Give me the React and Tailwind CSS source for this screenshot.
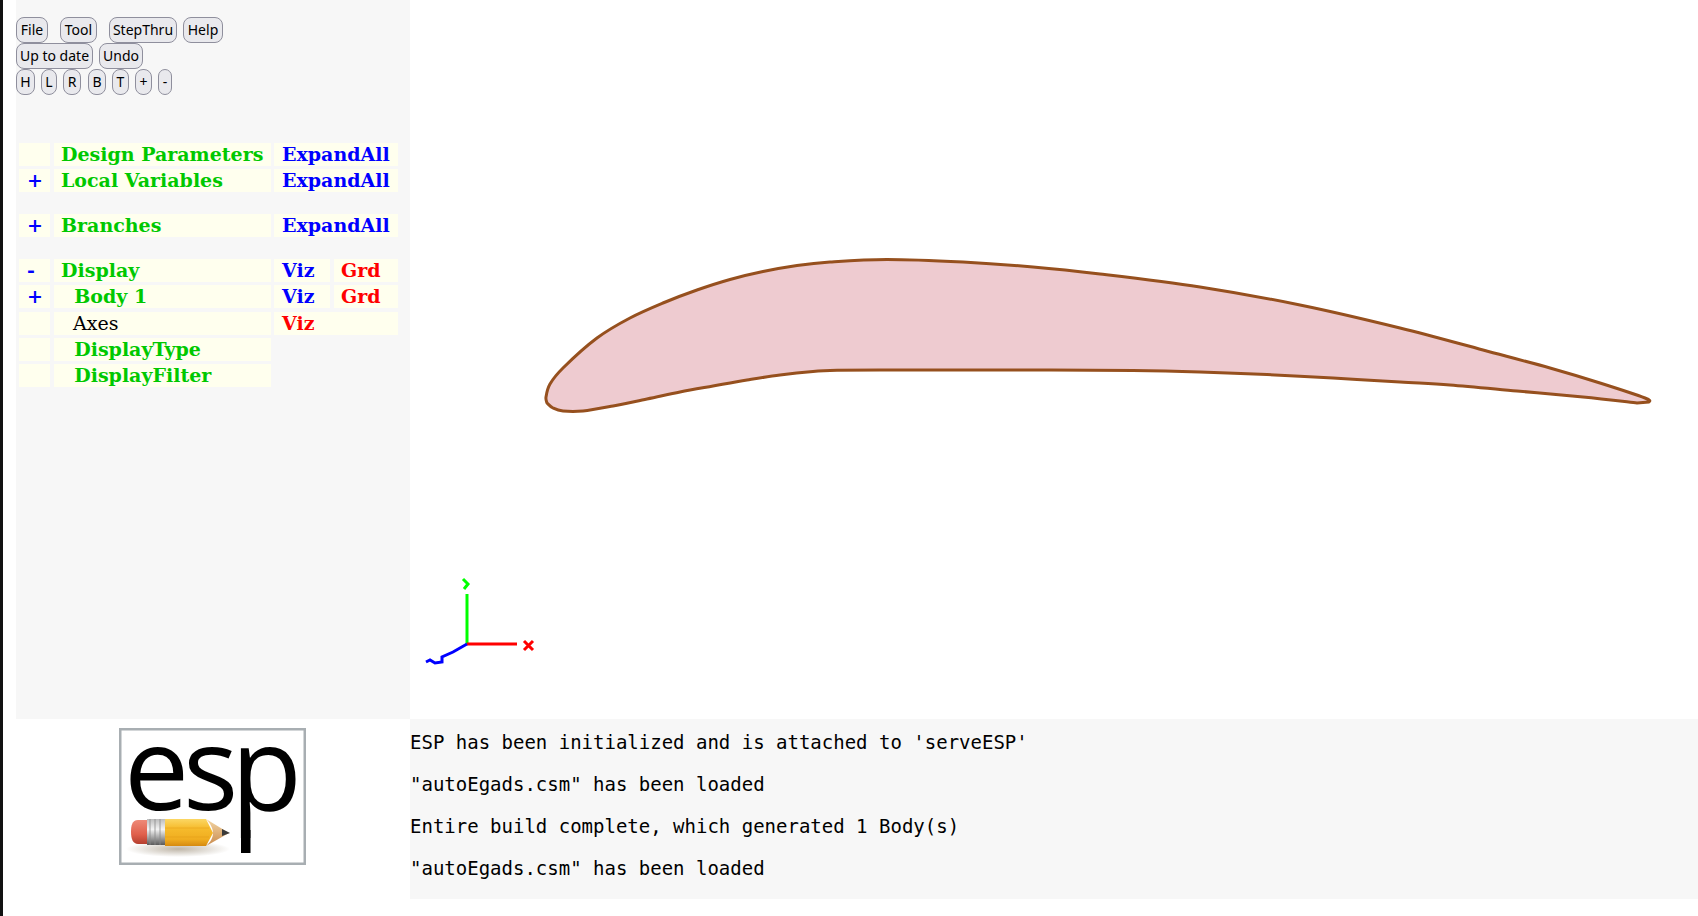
import React from "react";

const UPPER = [[547,403],[546,397],[550,384],[563,368],[597,338],[630,318],[663,303],[697,290],[730,279.5],[763,271.5],[797,265.5],[830,262],[887,259.5],[963,262],[1033,267],[1100,274],[1200,287],[1300,305],[1400,328],[1483,350],[1550,368],[1600,383],[1645,398],[1649,402]];
const LOWER = [[1637,403],[1583,397],[1517,391],[1450,385],[1400,382],[1333,378],[1267,374.5],[1200,372],[1133,370.5],[1050,370],[950,370],[880,370],[837,370.3],[813,371.5],[780,375],[747,380],[713,386],[680,392],[647,399],[613,406],[583,411],[563,411],[553,408],[547,403]];

function smooth(pts) {
  let d = `M${pts[0][0]} ${pts[0][1]}`;
  for (let i = 0; i < pts.length - 1; i++) {
    const p0 = pts[Math.max(i - 1, 0)];
    const p1 = pts[i];
    const p2 = pts[i + 1];
    const p3 = pts[Math.min(i + 2, pts.length - 1)];
    const c1x = p1[0] + (p2[0] - p0[0]) / 6;
    const c1y = p1[1] + (p2[1] - p0[1]) / 6;
    const c2x = p2[0] - (p3[0] - p1[0]) / 6;
    const c2y = p2[1] - (p3[1] - p1[1]) / 6;
    d += ` C${c1x.toFixed(1)} ${c1y.toFixed(1)} ${c2x.toFixed(1)} ${c2y.toFixed(1)} ${p2[0]} ${p2[1]}`;
  }
  return d;
}

const AIRFOIL = smooth(UPPER) + " " + smooth(LOWER).replace(/^M/, "L") + " Z";

function Btn({ w, ml, children }) {
  return (
    <button className={`h-[26px] ${w} ${ml} shrink-0 rounded-lg border border-[#8f8f9d] bg-[#e9e9ed] text-center text-[14px] leading-none text-black [font-family:'Noto_Sans',sans-serif]`}>
      {children}
    </button>
  );
}

const serif = "[font-family:'DejaVu_Serif',serif] text-[19px] leading-[23px] font-bold whitespace-pre";

function Row({ mark, label, labelClass = "text-[#00c800]", right, mt = "mt-[3px]" }) {
  return (
    <div className={`flex h-[23px] ${mt} ${serif}`}>
      <div className="w-[31px] bg-[#ffffee] pl-2 text-[#0000ff]">{mark}</div>
      <div className={`ml-1 w-[217px] bg-[#ffffee] pl-[7px] ${labelClass}`}>{label}</div>
      {right}
    </div>
  );
}

const Expand = (
  <div className="ml-[3px] w-[124px] bg-[#ffffee] pl-2 text-[#0000ff]">ExpandAll</div>
);
const VizGrd = (
  <>
    <div className="ml-[3px] w-[56px] bg-[#ffffee] pl-2 text-[#0000ff]">Viz</div>
    <div className="ml-1 w-[64px] bg-[#ffffee] pl-[7px] text-[#ff0000]">Grd</div>
  </>
);

function Logo() {
  return (
    <svg width="187" height="137" viewBox="119 728 187 137" className="overflow-visible">
      <defs>
        <linearGradient id="eraser" x1="0" y1="0" x2="0" y2="1">
          <stop offset="0" stopColor="#ee8a78" />
          <stop offset="0.6" stopColor="#e0604c" />
          <stop offset="1" stopColor="#b5402f" />
        </linearGradient>
        <linearGradient id="ferrule" x1="0" y1="0" x2="0" y2="1">
          <stop offset="0" stopColor="#bcbcbc" />
          <stop offset="0.4" stopColor="#f4f4f4" />
          <stop offset="0.8" stopColor="#8e8e8e" />
          <stop offset="1" stopColor="#5a5a5a" />
        </linearGradient>
        <linearGradient id="body" x1="0" y1="0" x2="0" y2="1">
          <stop offset="0" stopColor="#fbd764" />
          <stop offset="0.35" stopColor="#f6bb2c" />
          <stop offset="0.75" stopColor="#f0ad20" />
          <stop offset="1" stopColor="#d68a10" />
        </linearGradient>
        <linearGradient id="wood" x1="0" y1="0" x2="0" y2="1">
          <stop offset="0" stopColor="#f3d6a6" />
          <stop offset="1" stopColor="#c98a4c" />
        </linearGradient>
        <radialGradient id="shade" cx="0.5" cy="0.5" r="0.5">
          <stop offset="0" stopColor="#8a7a60" stopOpacity="0.55" />
          <stop offset="1" stopColor="#8a7a60" stopOpacity="0" />
        </radialGradient>
      </defs>
      <rect x="120.25" y="729.25" width="184.5" height="134.5" fill="#ffffff" stroke="#a8aeb2" strokeWidth="2.5" />
      <text
        x="124 183 231"
        y="810"
        fontFamily="'Open Sans', sans-serif"
        fontWeight="400"
        fontSize="116"
        fill="#000000"
      >
        esp
      </text>
      <rect x="241" y="830" width="9.5" height="23" fill="#000000" />
      <ellipse cx="178" cy="849" rx="52" ry="8" fill="url(#shade)" />
      <path d="M148 820 H138 C132 820 131 826 131 832 C131 839 133 844 138 844 H148 Z" fill="url(#eraser)" />
      <rect x="147" y="819" width="18" height="26" fill="url(#ferrule)" />
      <path d="M150 819 V845 M155 819 V845 M160 819 V845" stroke="#8a8a8a" strokeWidth="0.8" />
      <path d="M165 819 H206 L213 833 L206 846 H165 Z" fill="url(#body)" />
      <path d="M165 828 H209 M165 837 H209" stroke="#e09a18" strokeWidth="0.7" opacity="0.6" />
      <path d="M206 819 L229 833 L206 846 C211 842 213 837 213 833 C213 828 210 823 206 819 Z" fill="url(#wood)" />
      <path d="M222 829 L230 833 L222 836 Z" fill="#3a3a3a" />
    </svg>
  );
}

export default function App() {
  return (
    <div className="flex h-screen overflow-hidden bg-white">
      <div className="w-[3px] shrink-0 bg-[#111111]" />
      <div className="flex min-w-0 flex-1 flex-col pl-[13px]">
        <div className="flex h-[719px]">
          <div className="w-[394px] shrink-0 bg-[#f7f7f7]">
            <div className="flex pt-[17px]">
              <Btn w="w-[32px]">File</Btn>
              <Btn w="w-[37px]" ml="ml-3">Tool</Btn>
              <Btn w="w-[68px]" ml="ml-3">StepThru</Btn>
              <Btn w="w-[40px]" ml="ml-[6px]">Help</Btn>
            </div>
            <div className="flex">
              <Btn w="w-[77px]">Up to date</Btn>
              <Btn w="w-[44px]" ml="ml-[6px]">Undo</Btn>
            </div>
            <div className="flex">
              <Btn w="w-[19px]">H</Btn>
              <Btn w="w-[16px]" ml="ml-[6px]">L</Btn>
              <Btn w="w-[18px]" ml="ml-[6px]">R</Btn>
              <Btn w="w-[18px]" ml="ml-[7px]">B</Btn>
              <Btn w="w-[17px]" ml="ml-[6px]">T</Btn>
              <Btn w="w-[17px]" ml="ml-[6px]">+</Btn>
              <Btn w="w-[14px]" ml="ml-[6px]">-</Btn>
            </div>
            <div className="pl-[3px] pt-[48px]">
              <Row mt="mt-0" label="Design Parameters" right={Expand} />
              <Row mark="+" label="Local Variables" right={Expand} />
              <Row mt="mt-[22px]" mark="+" label="Branches" right={Expand} />
              <Row mt="mt-[22px]" mark="-" label="Display" right={VizGrd} />
              <Row mark="+" label={"\u00a0\u00a0Body 1"} right={VizGrd} />
              <Row
                mt="mt-1"
                label={"\u00a0\u00a0Axes"}
                labelClass="text-black font-normal"
                right={<div className="ml-[3px] w-[124px] bg-[#ffffee] pl-2 text-[#ff0000]">Viz</div>}
              />
              <Row label={"\u00a0\u00a0DisplayType"} />
              <Row label={"\u00a0\u00a0DisplayFilter"} />
            </div>
          </div>
          <div className="min-w-0 flex-1 bg-white">
            <svg width="1288" height="719" viewBox="410 0 1288 719" className="block">
              <path d={AIRFOIL} fill="#eecbd0" stroke="#96501e" strokeWidth="3" strokeLinejoin="round" />
              <path d="M467 594 V644" stroke="#00ff00" strokeWidth="3" fill="none" />
              <path d="M463 579 L468 584 L464 589" stroke="#00ff00" strokeWidth="3" fill="none" />
              <path d="M467 644 H517" stroke="#ff0000" strokeWidth="3" fill="none" />
              <path d="M524 641 L533 650 M533 641 L524 650" stroke="#ff0000" strokeWidth="3" fill="none" />
              <path d="M467 644 L453 652 L442 657 L442 662 L435 663 L430 660 L426 662" stroke="#0000ff" strokeWidth="3" fill="none" />
            </svg>
          </div>
        </div>
        <div className="flex">
          <div className="w-[394px] shrink-0 pl-[103px] pt-[9px]">
            <Logo />
          </div>
          <div className="h-[180px] min-w-0 flex-1 bg-[#f7f7f7] pt-[2px] text-[19px] text-black [font-family:'DejaVu_Sans_Mono',monospace]">
            <div className="flex h-[42px] items-center whitespace-pre">ESP has been initialized and is attached to 'serveESP'</div>
            <div className="flex h-[42px] items-center whitespace-pre">"autoEgads.csm" has been loaded</div>
            <div className="flex h-[42px] items-center whitespace-pre">Entire build complete, which generated 1 Body(s)</div>
            <div className="flex h-[42px] items-center whitespace-pre">"autoEgads.csm" has been loaded</div>
          </div>
        </div>
      </div>
    </div>
  );
}
